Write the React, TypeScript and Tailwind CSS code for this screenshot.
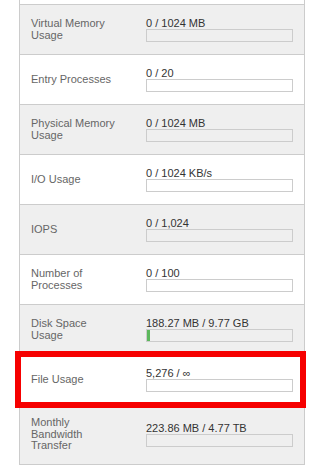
import React from "react";

type Row = {
  label: string;
  value: string;
  pct?: number;
  highlight?: boolean;
};

const rows: Row[] = [
  { label: "Virtual Memory Usage", value: "0 / 1024 MB" },
  { label: "Entry Processes", value: "0 / 20" },
  { label: "Physical Memory Usage", value: "0 / 1024 MB" },
  { label: "I/O Usage", value: "0 / 1024 KB/s" },
  { label: "IOPS", value: "0 / 1,024" },
  { label: "Number of Processes", value: "0 / 100" },
  { label: "Disk Space Usage", value: "188.27 MB / 9.77 GB", pct: 1.88 },
  { label: "File Usage", value: "5,276 / \u221e", highlight: true },
  { label: "Monthly Bandwidth Transfer", value: "223.86 MB / 4.77 TB", pct: 0 },
];

function StatRow({ r, i }: { r: Row; i: number }) {
  // even rows are the grey band
  const grey = i % 2 === 0;
  return (
    <div
      className={`relative flex items-center min-h-[50px] border-t border-[#cccccc] ${
        grey ? "bg-[#efefef]" : "bg-white"
      }`}
    >
      <div className="w-[126px] shrink-0 pl-[11px] pr-[28px] py-[12px] text-[#666666] leading-[11.7px]">
        {r.label}
      </div>
      <div className="flex-1 pr-[11px]">
        <div className="text-[#333333] leading-[12px] whitespace-nowrap">{r.value}</div>
        <div className="h-[13px] border border-[#cccccc]">
          {r.pct ? (
            <div className="h-full bg-[#5cb85c]" style={{ width: `${r.pct}%` }} />
          ) : null}
        </div>
      </div>
      {r.highlight && (
        <div className="absolute -top-[4px] -bottom-[4px] -left-[5px] -right-[2px] border-[6px] border-[#f60000] z-10 pointer-events-none" />
      )}
    </div>
  );
}

export default function App() {
  return (
    <div className="w-[319px] h-[470px] overflow-hidden bg-white font-['Liberation_Sans',Arial,sans-serif] text-[11px]">
      <div className="ml-[19px] w-[286px] border-x border-b border-[#cccccc]">
        {/* tail of the row scrolled above */}
        <div className="h-[4px] bg-white" />
        {rows.map((r, i) => (
          <StatRow key={r.label} r={r} i={i} />
        ))}
      </div>
    </div>
  );
}
